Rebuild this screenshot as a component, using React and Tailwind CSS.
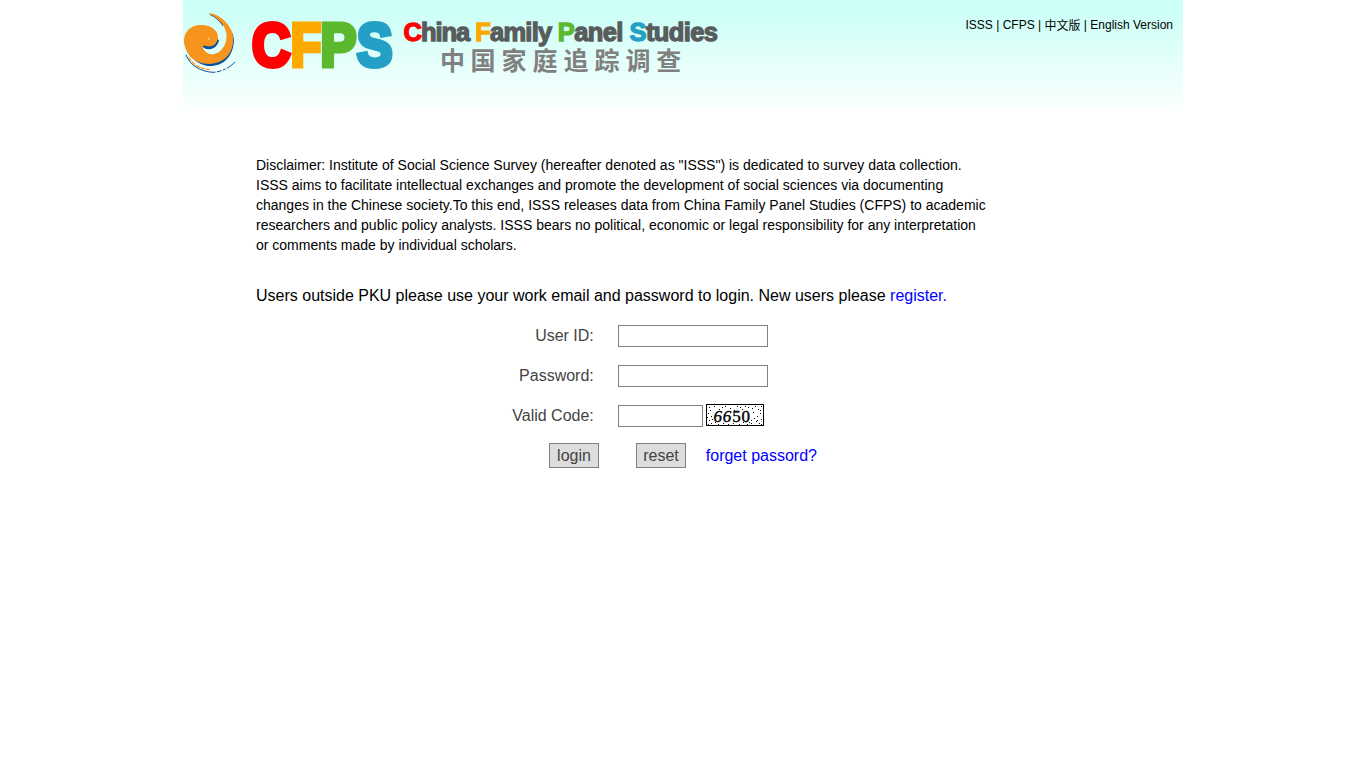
const specks = [
  [3,3],[8,2],[13,5],[19,2],[24,4],[31,2],[36,5],[42,3],[49,2],[52,5],[55,2],[2,9],[5,12],[3,16],[5,19],[9,18],[12,20],[17,19],
  [22,20],[27,19],[33,20],[37,18],[41,20],[45,19],[50,17],[53,19],[47,8],[51,12],[54,9],[55,15],[48,14],[46,4],[28,6],[16,3],[4,6],
  [10,8],[45,16],[51,16],[1,13],[6,15],[39,2],[54,6],[43,18],[2,20],[55,20],[34,3],
];

const initials = [
  ["C", 252, 38.4, "#f00"],
  ["F", 290.7, 30.4, "#ffa800"],
  ["P", 320.4, 35.8, "#5cb82e"],
  ["S", 357, 35.4, "#249fc6"],
];

const words = [
  ["C", "hina", 403.6, 66.5, "#f00"],
  ["F", "amily", 475.2, 77, "#ffa800"],
  ["P", "anel", 557.8, 65.5, "#5cb82e"],
  ["S", "tudies", 629.5, 88.5, "#249fc6"],
];

function Logo() {
  return (
    <svg width="550" height="80" viewBox="183 0 550 80" className="block shrink-0 overflow-visible">
      <g transform="translate(180 0) scale(.33333)">
        <path d="M18 164C28 195 62 215 99 217C124 216 150 202 165 186" fill="none" stroke="#0b4f9c" strokeWidth="3" strokeDasharray="110 4 14 5 8 5" />
        <path d="M24 160C44 201 75 211 105 210C119 208 130 203 140 198" fill="none" stroke="#fff" strokeWidth="6" />
        <path d="M26 172C45 201 67 207 90 209" fill="none" stroke="#f7941d" strokeWidth="4" strokeDasharray="13 3" />
        <path d="M22 155C40 185 68 199 97 198C136 195 160 165 162 121L158 98L110 180L50 178Z" fill="#0b4f9c" />
        <path d="M88 44C103 50 118 61 128 78L132 70L96 42Z" fill="#0b4f9c" />
        <path d="M66 137C76 153 110 153 117 121L105 118Z" fill="#0b4f9c" />
        <path d="M87 39C118 43 142 65 155 92C165 120 159 154 136 175C105 201 58 195 33 172C14 151 6 122 17 100C28 80 48 73 70 75C97 77 115 93 114 114C113 135 91 145 75 137L67 138C69 151 83 164 99 163C127 158 143 129 139 99C134 76 118 56 88 42Z" fill="#f7941d" />
        <path d="M67 138C78 153 108 150 116 120L113 117C110 138 91 145 75 137Z" fill="#0b4f9c" />
        <circle cx="86" cy="116" r="3" fill="#fbd3a0" />
      </g>
      <g fontFamily="'Liberation Sans', sans-serif" fontWeight="700" fontSize="61" strokeWidth="5">
        {initials.map(([letter, x, width, color]) => (
          <text key={letter} x={x} y="65.5" textLength={width} lengthAdjust="spacingAndGlyphs" fill={color} stroke={color}>{letter}</text>
        ))}
      </g>
      <g fontFamily="'Liberation Sans', sans-serif" fontWeight="700" fontSize="25.5" fill="#595c5c" stroke="#595c5c" strokeWidth="1.3">
        {words.map(([first, rest, x, width, color]) => (
          <text key={first} x={x} y="40.8" textLength={width}><tspan fill={color} stroke={color}>{first}</tspan>{rest}</text>
        ))}
      </g>
      <text x="440 470.5 501.5 532.5 563.5 594.5 625.5 656.3" y="70" fontFamily="'Noto Sans CJK SC', sans-serif" fontWeight="700" fontSize="25" fill="#808080">中国家庭追踪调查</text>
    </svg>
  );
}

function Captcha() {
  return (
    <svg width="58" height="22" viewBox="0 0 58 22" className="mb-px ml-[3px] block shrink-0" shapeRendering="crispEdges">
      <rect x=".5" y=".5" width="57" height="21" fill="#fff" stroke="#000" />
      {specks.map(([x, y]) => <rect key={`${x}-${y}`} x={x} y={y} width="1" height="1" />)}
      <text x="7.5" y="18.3" fontFamily="'Liberation Serif', serif" fontSize="17" textLength="36.5" stroke="#000" strokeWidth=".4"><tspan fontStyle="italic">66</tspan>50</text>
    </svg>
  );
}

function Row({ label, children }) {
  return (
    <div className="flex h-10 items-center pt-px">
      <label className="w-[337.8px] pt-px text-right">{label}</label>
      <div className="ml-[24.2px] flex items-center">{children}</div>
    </div>
  );
}

const field = "block h-[22px] border border-[#808080] bg-white px-1 text-sm outline-none";
const button = "h-[25px] w-[50px] border border-[#808080] bg-[#ddd] text-center leading-[23px]";

export default function App() {
  return (
    <div className="min-h-screen bg-white font-['Liberation_Sans','Noto_Sans_CJK_SC',sans-serif] text-black">
      <div className="mx-auto w-[1000px]">
        <header className="flex h-[110px] justify-between bg-linear-to-b from-[#ccfff7] from-10% to-[#fafffe]">
          <Logo />
          <nav className="pr-[10px] text-xs leading-[50px] whitespace-nowrap">
            <a href="#isss">ISSS</a> | <a href="#cfps">CFPS</a> | <a href="#zh" className="align-[-1px] leading-none">中文版</a> | <a href="#en">English Version</a>
          </nav>
        </header>
        <main className="ml-[73px] w-[732px] pt-[45px]">
          <p className="text-sm leading-5">
            Disclaimer: Institute of Social Science Survey (hereafter denoted as "ISSS") is dedicated to survey data collection.<br />
            ISSS aims to facilitate intellectual exchanges and promote the development of social sciences via documenting<br />
            changes in the Chinese society.To this end, ISSS releases data from China Family Panel Studies (CFPS) to academic<br />
            researchers and public policy analysts. ISSS bears no political, economic or legal responsibility for any interpretation<br />
            or comments made by individual scholars.
          </p>
          <p className="mt-[21px] h-[39px] leading-10">
            Users outside PKU please use your work email and password to login. New users please <a href="#register" className="text-[#00f]">register.</a>
          </p>
          <form className="text-[#444]">
            <Row label="User ID:"><input className={`${field} w-[150px]`} /></Row>
            <Row label="Password:"><input type="password" className={`${field} w-[150px]`} /></Row>
            <Row label="Valid Code:"><input className={`${field} w-[85px]`} /><Captcha /></Row>
            <div className="flex h-10 items-center pl-[293px]">
              <button type="button" className={button}>login</button>
              <button type="reset" className={`${button} ml-[37px]`}>reset</button>
              <a href="#forget" className="ml-[19.8px] pt-0.5 text-[#00f]">forget passord?</a>
            </div>
          </form>
        </main>
      </div>
    </div>
  );
}
